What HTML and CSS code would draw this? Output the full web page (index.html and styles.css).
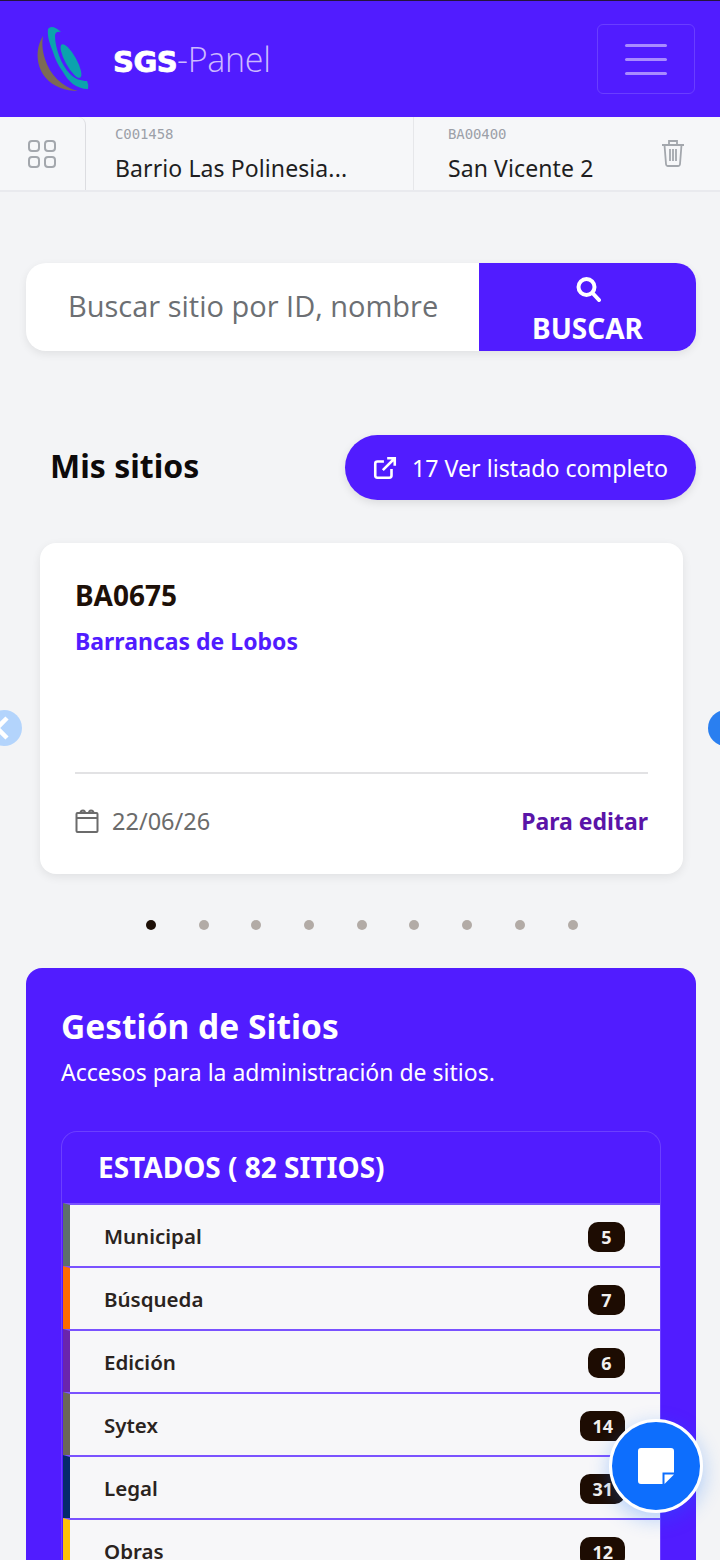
FILE: index.html
```html
<!DOCTYPE html>
<html lang="es">
<head>
<meta charset="utf-8">
<title>SGS-Panel</title>
<link rel="stylesheet" href="styles.css">
</head>
<body>
<div class="page">
  <header class="topbar">
    <div class="brand">
      <svg class="logo" viewBox="35 25 56 70" width="56" height="70">
        <path d="M43 37C36 48 35 65 45 78C53 88 66 92 78 92C62 88 50 76 45 60C42 50 42 44 43 37Z" fill="#7c6a55"/>
        <path d="M48 30Q52 25 61 33Q55 32 55 37C55 48 61 66 70 75C75 80 81 82 87 82Q89 86 88 90C76 90 68 82 63 73C58 66 55 60 53 53C50 45 47 38 48 30Z" fill="#0ba3ad"/>
        <ellipse cx="71" cy="62" rx="5.500" ry="19" transform="rotate(-29 71 62)" fill="#0ba3ad"/>
      </svg>
      <span class="brand-name"><b>SGS</b><span class="brand-sub">-Panel</span></span>
    </div>
    <button class="burger" type="button" aria-label="Menú"><i></i><i></i><i></i></button>
  </header>

  <nav class="tabs">
    <div class="tab-grid">
      <svg viewBox="0 0 30 30" width="30" height="30" fill="none" stroke="#a3a7ad" stroke-width="2"><rect x="2" y="2" width="10" height="10" rx="3"/><rect x="18" y="2" width="10" height="10" rx="3"/><rect x="2" y="18" width="10" height="10" rx="3"/><rect x="18" y="18" width="10" height="10" rx="3"/></svg>
    </div>
    <div class="tab tab-first"><span class="tab-id">C001458</span><span class="tab-name">Barrio Las Polinesia...</span></div>
    <div class="tab tab-second"><span class="tab-id">BA00400</span><span class="tab-name">San Vicente 2</span></div>
    <svg class="trash" viewBox="0 0 24 28" width="24" height="28" fill="none" stroke="#a3a7ad" stroke-width="1.800"><path d="M1 6H23M8 5V2H16V5M3.500 6L5 25Q5.200 27 7 27H17Q18.800 27 19 25L20.500 6M9 10V22M12 10V22M15 10V22"/></svg>
  </nav>

  <main class="content">
    <form class="search">
      <div class="search-input">Buscar sitio por ID, nombre</div>
      <button class="search-btn" type="button">
        <svg viewBox="0 0 26 26" width="26" height="26" fill="none" stroke="#fff" stroke-width="4"><circle cx="11.500" cy="11" r="8"/><path d="M17.500 17L24 24" stroke-linecap="round"/></svg>
        <span>BUSCAR</span>
      </button>
    </form>

    <section class="sites-head">
      <h2>Mis sitios</h2>
      <a class="list-btn">
        <svg viewBox="0 0 24 24" width="26" height="26" fill="none" stroke="#fff" stroke-width="2.400"><path d="M11 6H5Q3 6 3 8V19Q3 21 5 21H16Q18 21 18 19V13M14 3H21V10M21 3L10 14"/></svg>
        <span>17 Ver listado completo</span>
      </a>
    </section>

    <section class="carousel">
      <span class="arrow arrow-left"><svg viewBox="0 0 36 36" width="36" height="36" fill="none" stroke="#fff" stroke-width="4.500"><path d="M21 8L11 18L21 28"/></svg></span>
      <article class="site-card">
        <h3>BA0675</h3>
        <p class="site-name">Barrancas de Lobos</p>
        <div class="site-foot">
          <span class="site-date">
            <svg viewBox="0 0 24 24" width="24" height="26" fill="none" stroke="#6b6b6b" stroke-width="2"><rect x="1.500" y="4" width="21" height="19" rx="1"/><path d="M1.500 9H22.500M5.500 4Q5.500 1.500 8 1.500Q10 1.500 10 4M14 4Q14 1.500 16 1.500Q18.500 1.500 18.500 4"/></svg>
            22/06/26
          </span>
          <span class="site-status">Para editar</span>
        </div>
      </article>
      <span class="arrow arrow-right"></span>
    </section>

    <div class="dots"><i class="on"></i><i></i><i></i><i></i><i></i><i></i><i></i><i></i><i></i></div>

    <section class="panel">
      <h2>Gestión de Sitios</h2>
      <p>Accesos para la administración de sitios.</p>
      <div class="states">
        <div class="states-head">ESTADOS ( 82 SITIOS)</div>
        <ul class="state-list">
          <li class="c-muni"><span>Municipal</span><b>5</b></li>
          <li class="c-busq"><span>Búsqueda</span><b>7</b></li>
          <li class="c-edic"><span>Edición</span><b>6</b></li>
          <li class="c-sytx"><span>Sytex</span><b>14</b></li>
          <li class="c-legl"><span>Legal</span><b>31</b></li>
          <li class="c-obra"><span>Obras</span><b>12</b></li>
        </ul>
      </div>
    </section>
  </main>

  <button class="fab" type="button" aria-label="Notas">
    <svg viewBox="0 0 36 36" width="36" height="36" fill="#fff"><path d="M3 0H33Q36 0 36 3V24.500H24.500V36H3Q0 36 0 33V3Q0 0 3 0Z"/><path d="M26.500 26.500H36L26.500 36Z"/></svg>
  </button>
</div>
</body>
</html>
```

FILE: styles.css
```css
* { box-sizing: border-box; }
html, body { margin: 0; padding: 0; }
body { background: #f3f4f6; font-family: "Noto Sans", "Open Sans", sans-serif; color: #1d1008; }
.page { width: 720px; height: 1560px; overflow: hidden; position: relative; }

.topbar { height: 117px; background: #511cff; border-top: 1px solid #24143f; display: flex; align-items: center; justify-content: space-between; padding: 0 25px 0 35px; }
.brand { display: flex; align-items: center; gap: 22px; }
.logo { display: block; }
.brand-name { font-size: 32px; line-height: 1; color: #fff; }
.brand-name b { font-family: "DejaVu Sans", sans-serif; font-weight: 700; font-size: 29px; letter-spacing: -0.5px; -webkit-text-stroke: .8px #fff; }
.brand-sub { font-weight: 300; color: #cdbaff; font-family: "Open Sans", sans-serif; font-size: 34px; letter-spacing: -.3px; }
.burger { width: 98px; height: 70px; background: transparent; border: 1px solid #6a3eff; border-radius: 6px; display: flex; flex-direction: column; align-items: center; justify-content: center; gap: 11px; padding: 0; }
.burger i { display: block; width: 42px; height: 3px; border-radius: 2px; background: #a98bff; }

.tabs { height: 75px; display: flex; align-items: stretch; background: #f6f7f9; border-bottom: 2px solid #e9eaee; position: relative; }
.tab-grid { width: 86px; display: flex; align-items: center; justify-content: center; padding-right: 2px; border-right: 1px solid #dcdde1; border-radius: 0 8px 0 0; }
.tab-grid svg { margin-top: 1px; }
.tab { display: flex; flex-direction: column; padding-top: 9px; }
.tab-first { width: 328px; padding-left: 29px; border-right: 1px solid #e6e7ea; }
.tab-second { flex: 1; padding-left: 34px; }
.tab-id { font-family: "DejaVu Sans Mono", monospace; font-size: 14px; line-height: 16px; color: #9ca0a8; letter-spacing: -.1px; }
.tab-name { font-size: 23px; line-height: 32px; margin-top: 10px; color: #1e1e22; white-space: nowrap; letter-spacing: .1px; }
.trash { position: absolute; right: 35px; top: 22px; }

.content { padding: 71px 24px 0 26px; }
.search { display: flex; height: 88px; background: #fff; border-radius: 20px; overflow: hidden; box-shadow: 0 3px 8px rgba(0,0,0,.08); }
.search-input { flex: 1; display: flex; align-items: center; padding-left: 42px; padding-bottom: 4px; font-size: 29px; color: #6c6f73; white-space: nowrap; overflow: hidden; font-family: "Open Sans", sans-serif; }
.search-btn { width: 217px; background: #511cff; color: #fff; border: 0; padding: 7px 0 0; display: flex; flex-direction: column; align-items: center; justify-content: center; gap: 9px; font: 700 28px/34px "Noto Sans", sans-serif; }

.sites-head { display: flex; align-items: center; justify-content: space-between; margin-top: 84px; padding-left: 24px; height: 65px; }
.sites-head h2 { margin: 0; padding-bottom: 4px; font-size: 32px; font-weight: 700; color: #0d0a0a; }
.list-btn { width: 351px; height: 65px; border-radius: 33px; background: #511cff; color: #fff; display: flex; align-items: center; gap: 14px; padding-left: 27px; font-size: 23.200px; box-shadow: 0 3px 8px rgba(0,0,0,.1); white-space: nowrap; }

.carousel { position: relative; margin-top: 43px; padding: 0 13px 0 14px; }
.site-card { height: 331px; background: #fff; border-radius: 16px; box-shadow: 0 3px 10px rgba(0,0,0,.08); padding: 32px 35px 0; display: flex; flex-direction: column; }
.site-card h3 { margin: 0; font-size: 28px; line-height: 40px; font-weight: 700; color: #1d1008; }
.site-name { margin: 9px 0 0; font-size: 23px; line-height: 34px; font-weight: 700; color: #511cff; }
.site-foot { margin-top: 114px; border-top: 2px solid #e2e2e4; display: flex; align-items: center; justify-content: space-between; height: 96px; }
.site-date { display: flex; align-items: center; gap: 13px; font-size: 23.500px; color: #6b6b6b; font-weight: 400; }
.site-status { font-size: 23px; font-weight: 700; color: #5a14a8; }
.arrow { position: absolute; top: 167px; width: 36px; height: 36px; border-radius: 50%; display: block; }
.arrow-left { left: -40px; background: #b3d4fc; }
.arrow-left svg { display: block; }
.arrow-right { right: -48px; background: #2a7ff0; }

.dots { display: flex; gap: 42.700px; padding-left: 120px; margin-top: 46px; height: 10px; }
.dots i { width: 10px; height: 10px; border-radius: 50%; background: #b2aba6; display: block; }
.dots i.on { background: #1d1008; }

.panel { margin-top: 38px; height: 700px; background: #511cff; border-radius: 16px 16px 0 0; padding: 35px 35px 0; color: #fff; }
.panel h2 { margin: 0; font-size: 33.500px; line-height: 46px; font-weight: 700; }
.panel p { margin: 0; font-size: 23px; line-height: 46px; }
.states { margin-top: 36px; border: 1px solid #6c3fff; border-bottom: 0; border-radius: 16px 16px 0 0; }
.states-head { height: 71px; padding: 0 0 2px 36px; display: flex; align-items: center; font-size: 28px; font-weight: 700; }
.state-list { list-style: none; margin: 0; padding: 0; }
.state-list li { height: 63px; display: flex; align-items: center; justify-content: space-between; background: #f7f7f9; color: #2a2320; border-top: 2px solid #7a52ff; border-left: 7px solid #666; margin-left: 1px; padding: 0 35px 0 34px; font-size: 20.500px; font-weight: 600; }
.state-list b { min-width: 37px; height: 30px; padding: 0 12px; margin-top: 2px; background: #1d0c02; color: #f3f0ee; border-radius: 10px; display: flex; align-items: center; justify-content: center; font-size: 18px; font-weight: 700; }
li.c-muni { border-left-color: #5d6f6c; }
li.c-busq { border-left-color: #ff6a00; }
li.c-edic { border-left-color: #6a25ad; }
li.c-sytx { border-left-color: #6b6658; }
li.c-legl { border-left-color: #052a6b; }
li.c-obra { border-left-color: #ffc107; }

.fab { position: absolute; left: 609px; top: 1419px; width: 94px; height: 94px; border-radius: 50%; background: #0d6efd; border: 3px solid #fff; padding: 0; display: flex; align-items: center; justify-content: center; box-shadow: 0 6px 20px rgba(13,110,253,.3); }
```
